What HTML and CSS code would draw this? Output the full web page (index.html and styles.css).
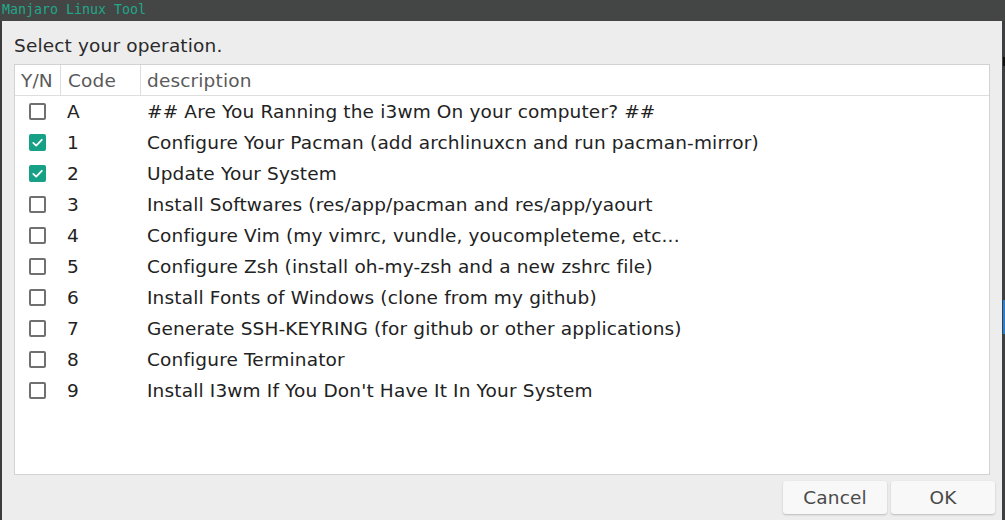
FILE: index.html
```html
<!DOCTYPE html>
<html>
<head>
<meta charset="utf-8">
<link rel="stylesheet" href="styles.css">
</head>
<body>
<div class="titlebar">Manjaro Linux Tool</div>
<div class="main">
  <div class="edge-left"></div>
  <div class="window">
    <div class="prompt">Select your operation.</div>
    <div class="table">
      <div class="row head">
        <div class="cell c1">Y/N</div>
        <div class="cell c2">Code</div>
        <div class="cell c3">description</div>
      </div>
      <div class="row"><div class="cell c1"><span class="cb"></span></div><div class="cell c2">A</div><div class="cell c3">## Are You Ranning the i3wm On your computer? ##</div></div>
      <div class="row"><div class="cell c1"><span class="cb on"><svg viewBox="0 0 17 17" width="17" height="17"><path d="M4.3 8.9 L7.2 11.6 L12.8 5.8" fill="none" stroke="#fff" stroke-width="1.8" stroke-linecap="round" stroke-linejoin="round"/></svg></span></div><div class="cell c2">1</div><div class="cell c3">Configure Your Pacman (add archlinuxcn and run pacman-mirror)</div></div>
      <div class="row"><div class="cell c1"><span class="cb on"><svg viewBox="0 0 17 17" width="17" height="17"><path d="M4.3 8.9 L7.2 11.6 L12.8 5.8" fill="none" stroke="#fff" stroke-width="1.8" stroke-linecap="round" stroke-linejoin="round"/></svg></span></div><div class="cell c2">2</div><div class="cell c3">Update Your System</div></div>
      <div class="row"><div class="cell c1"><span class="cb"></span></div><div class="cell c2">3</div><div class="cell c3">Install Softwares (res/app/pacman and res/app/yaourt</div></div>
      <div class="row"><div class="cell c1"><span class="cb"></span></div><div class="cell c2">4</div><div class="cell c3">Configure Vim (my vimrc, vundle, youcompleteme, etc...</div></div>
      <div class="row"><div class="cell c1"><span class="cb"></span></div><div class="cell c2">5</div><div class="cell c3">Configure Zsh (install oh-my-zsh and a new zshrc file)</div></div>
      <div class="row"><div class="cell c1"><span class="cb"></span></div><div class="cell c2">6</div><div class="cell c3">Install Fonts of Windows (clone from my github)</div></div>
      <div class="row"><div class="cell c1"><span class="cb"></span></div><div class="cell c2">7</div><div class="cell c3">Generate SSH-KEYRING (for github or other applications)</div></div>
      <div class="row"><div class="cell c1"><span class="cb"></span></div><div class="cell c2">8</div><div class="cell c3">Configure Terminator</div></div>
      <div class="row"><div class="cell c1"><span class="cb"></span></div><div class="cell c2">9</div><div class="cell c3">Install I3wm If You Don't Have It In Your System</div></div>
    </div>
    <div class="buttons">
      <button class="btn">Cancel</button>
      <button class="btn">OK</button>
    </div>
  </div>
  <div class="edge-right"><div class="mark-black"></div><div class="mark-blue"></div></div>
</div>
</body>
</html>
```
FILE: styles.css
```css
html, body {
  margin: 0;
  padding: 0;
  width: 1005px;
  height: 520px;
  overflow: hidden;
  background: #434645;
}
.titlebar {
  height: 21px;
  box-sizing: border-box;
  padding: 1px 0 0 2px;
  font-family: "DejaVu Sans Mono", monospace;
  font-size: 13.3px;
  line-height: 18px;
  color: #22a68a;
  background: #434645;
}
.main {
  display: flex;
  height: 499px;
}
.edge-left {
  width: 2px;
  background: #3b3d3d;
}
.window {
  width: 1000px;
  background: #ededed;
  display: flex;
  flex-direction: column;
  font-family: "DejaVu Sans", sans-serif;
  font-size: 18.5px;
  letter-spacing: 0.15px;
}
.prompt {
  padding: 13px 0 0 12px;
  height: 30px;
  line-height: 24px;
  color: #2a2a2a;
  box-sizing: border-box;
}
.table {
  margin: 13px 12px 0 12px;
  height: 411px;
  box-sizing: border-box;
  border: 1px solid #d2d2d2;
  background: #fff;
}
.row {
  display: grid;
  grid-template-columns: 46px 80px 1fr;
  height: 31px;
  align-items: center;
  color: #222;
}
.row.head {
  height: 30px;
  border-bottom: 1px solid #dedede;
  color: #5a5a5a;
  align-items: stretch;
}
.head .cell {
  display: flex;
  align-items: center;
}
.head .c1 { padding-left: 6px; border-right: 1px solid #dedede; }
.head .c2 { padding-left: 7px; border-right: 1px solid #dedede; }
.head .c3 { padding-left: 6px; }
.cell.c1 { display: flex; align-items: center; }
.row:not(.head) .c1 { padding-left: 14px; }
.row:not(.head) .c2 { padding-left: 6px; }
.row:not(.head) .c3 { padding-left: 6px; }
.cb {
  display: inline-block;
  width: 17px;
  height: 17px;
  box-sizing: border-box;
  border: 2px solid #707070;
  border-radius: 2px;
}
.cb.on {
  border: none;
  background: #16a085;
}
.cb svg { display: block; }
.buttons {
  display: flex;
  justify-content: flex-end;
  gap: 4px;
  padding: 6px 7px 0 0;
}
.btn {
  width: 104px;
  height: 33px;
  border: none;
  border-radius: 3px;
  background: #f8f8f8;
  box-shadow: 0 1px 2px rgba(0,0,0,0.22);
  font-family: "DejaVu Sans", sans-serif;
  font-size: 18.5px;
  letter-spacing: 0.15px;
  color: #4a4a4a;
  padding: 0;
}
.edge-right {
  flex: 1;
  background: #3d4040;
  display: flex;
  flex-direction: column;
}
.mark-black {
  margin-top: 36px;
  height: 9px;
  margin-left: 1px;
  background: #111;
}
.mark-blue {
  margin-top: 234px;
  height: 34px;
  margin-left: 1px;
  background: #2b7fd0;
}
```
